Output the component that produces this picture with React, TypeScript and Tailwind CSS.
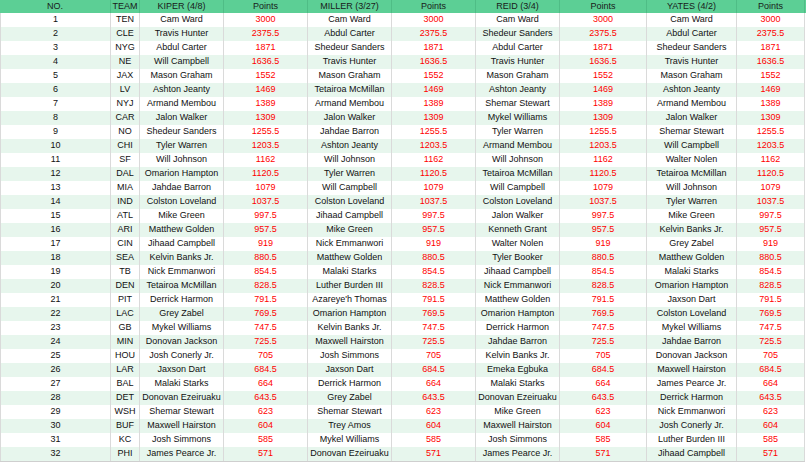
const headers = ['NO.', 'TEAM', 'KIPER (4/8)', 'Points', 'MILLER (3/27)', 'Points', 'REID (3/4)', 'Points', 'YATES (4/2)', 'Points']

// [team, points, kiper, miller, reid, yates]
const picks: [string, string, string, string, string, string][] = [
  ['TEN', '3000', 'Cam Ward', 'Cam Ward', 'Cam Ward', 'Cam Ward'],
  ['CLE', '2375.5', 'Travis Hunter', 'Abdul Carter', 'Shedeur Sanders', 'Abdul Carter'],
  ['NYG', '1871', 'Abdul Carter', 'Shedeur Sanders', 'Abdul Carter', 'Shedeur Sanders'],
  ['NE', '1636.5', 'Will Campbell', 'Travis Hunter', 'Travis Hunter', 'Travis Hunter'],
  ['JAX', '1552', 'Mason Graham', 'Mason Graham', 'Mason Graham', 'Mason Graham'],
  ['LV', '1469', 'Ashton Jeanty', 'Tetairoa McMillan', 'Ashton Jeanty', 'Ashton Jeanty'],
  ['NYJ', '1389', 'Armand Membou', 'Armand Membou', 'Shemar Stewart', 'Armand Membou'],
  ['CAR', '1309', 'Jalon Walker', 'Jalon Walker', 'Mykel Williams', 'Jalon Walker'],
  ['NO', '1255.5', 'Shedeur Sanders', 'Jahdae Barron', 'Tyler Warren', 'Shemar Stewart'],
  ['CHI', '1203.5', 'Tyler Warren', 'Ashton Jeanty', 'Armand Membou', 'Will Campbell'],
  ['SF', '1162', 'Will Johnson', 'Will Johnson', 'Will Johnson', 'Walter Nolen'],
  ['DAL', '1120.5', 'Omarion Hampton', 'Tyler Warren', 'Tetairoa McMillan', 'Tetairoa McMillan'],
  ['MIA', '1079', 'Jahdae Barron', 'Will Campbell', 'Will Campbell', 'Will Johnson'],
  ['IND', '1037.5', 'Colston Loveland', 'Colston Loveland', 'Colston Loveland', 'Tyler Warren'],
  ['ATL', '997.5', 'Mike Green', 'Jihaad Campbell', 'Jalon Walker', 'Mike Green'],
  ['ARI', '957.5', 'Matthew Golden', 'Mike Green', 'Kenneth Grant', 'Kelvin Banks Jr.'],
  ['CIN', '919', 'Jihaad Campbell', 'Nick Emmanwori', 'Walter Nolen', 'Grey Zabel'],
  ['SEA', '880.5', 'Kelvin Banks Jr.', 'Matthew Golden', 'Tyler Booker', 'Matthew Golden'],
  ['TB', '854.5', 'Nick Emmanwori', 'Malaki Starks', 'Jihaad Campbell', 'Malaki Starks'],
  ['DEN', '828.5', 'Tetairoa McMillan', 'Luther Burden III', 'Nick Emmanwori', 'Omarion Hampton'],
  ['PIT', '791.5', 'Derrick Harmon', "Azareye'h Thomas", 'Matthew Golden', 'Jaxson Dart'],
  ['LAC', '769.5', 'Grey Zabel', 'Omarion Hampton', 'Omarion Hampton', 'Colston Loveland'],
  ['GB', '747.5', 'Mykel Williams', 'Kelvin Banks Jr.', 'Derrick Harmon', 'Mykel Williams'],
  ['MIN', '725.5', 'Donovan Jackson', 'Maxwell Hairston', 'Jahdae Barron', 'Jahdae Barron'],
  ['HOU', '705', 'Josh Conerly Jr.', 'Josh Simmons', 'Kelvin Banks Jr.', 'Donovan Jackson'],
  ['LAR', '684.5', 'Jaxson Dart', 'Jaxson Dart', 'Emeka Egbuka', 'Maxwell Hairston'],
  ['BAL', '664', 'Malaki Starks', 'Derrick Harmon', 'Malaki Starks', 'James Pearce Jr.'],
  ['DET', '643.5', 'Donovan Ezeiruaku', 'Grey Zabel', 'Donovan Ezeiruaku', 'Derrick Harmon'],
  ['WSH', '623', 'Shemar Stewart', 'Shemar Stewart', 'Mike Green', 'Nick Emmanwori'],
  ['BUF', '604', 'Maxwell Hairston', 'Trey Amos', 'Maxwell Hairston', 'Josh Conerly Jr.'],
  ['KC', '585', 'Josh Simmons', 'Mykel Williams', 'Josh Simmons', 'Luther Burden III'],
  ['PHI', '571', 'James Pearce Jr.', 'Donovan Ezeiruaku', 'James Pearce Jr.', 'Jihaad Campbell'],
]

const cols = 'grid grid-cols-[111px_29px_84px_84px_84px_84px_84px_87px_90px_68px]'

function Cell({ children, red, first }: { children: React.ReactNode; red?: boolean; first?: boolean }) {
  return (
    <div
      className={`flex items-center justify-center whitespace-nowrap overflow-hidden border-r border-[#dadada] ${
        first ? 'border-l' : ''
      } ${red ? 'text-[#ff0000]' : 'text-[#111]'}`}
    >
      {children}
    </div>
  )
}

export default function App() {
  return (
    <div className="w-[806px] h-[462px] bg-white text-[9px] font-['Liberation_Sans',Arial,sans-serif]">
      <div className={`${cols} h-[13px] bg-[#5ccf95] text-[#1a1a1a]`}>
        {headers.map((h, i) => (
          <div key={i} className="flex items-center justify-center border-r border-[#4fbd86]">
            {h}
          </div>
        ))}
      </div>

      <div className="w-[805px] border-b border-[#cfcfcf]">
        {picks.map(([team, pts, kiper, miller, reid, yates], i) => (
          <div
            key={team}
            className={`${cols} h-[14px] ${i % 2 === 1 ? 'bg-[#e7f6ed]' : 'bg-white'}`}
          >
            <Cell first>{i + 1}</Cell>
            <Cell>{team}</Cell>
            <Cell>{kiper}</Cell>
            <Cell red>{pts}</Cell>
            <Cell>{miller}</Cell>
            <Cell red>{pts}</Cell>
            <Cell>{reid}</Cell>
            <Cell red>{pts}</Cell>
            <Cell>{yates}</Cell>
            <Cell red>{pts}</Cell>
          </div>
        ))}
      </div>
    </div>
  )
}
